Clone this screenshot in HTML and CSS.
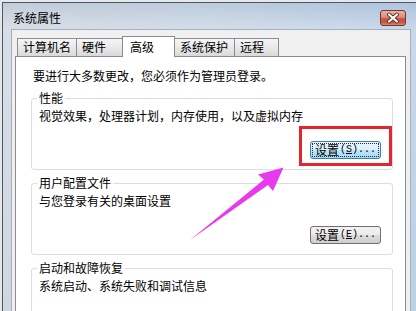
FILE: index.html
```html
<!DOCTYPE html>
<html lang="zh-CN">
<head>
<meta charset="utf-8">
<title>系统属性</title>
<link rel="stylesheet" href="styles.css">
</head>
<body>
<div class="screen">
  <div class="window">
    <div class="titlebar">
      <span class="title">系统属性</span>
      <span class="close">
        <svg width="26" height="16" viewBox="0 0 26 16">
          <path d="M9 4.5 L17 11.5 M17 4.5 L9 11.5" stroke="#5a2a22" stroke-width="4" stroke-linecap="round"/>
          <path d="M9 4.5 L17 11.5 M17 4.5 L9 11.5" stroke="#ffffff" stroke-width="2.2" stroke-linecap="round"/>
        </svg>
      </span>
    </div>
    <div class="client">
      <div class="tabs">
        <div class="tab t1">计算机名</div>
        <div class="tab t2">硬件</div>
        <div class="tab active">高级</div>
        <div class="tab t4">系统保护</div>
        <div class="tab t5">远程</div>
      </div>
      <div class="panel">
        <p class="intro">要进行大多数更改，您必须作为管理员登录。</p>
        <fieldset class="group">
          <legend>性能</legend>
          <p class="desc">视觉效果，处理器计划，内存使用，以及虚拟内存</p>
          <div class="actions">
            <button class="btn focused"><span class="focus-ring">设置<span class="acc">(<u>S</u>)...</span></span></button>
          </div>
        </fieldset>
        <fieldset class="group">
          <legend>用户配置文件</legend>
          <p class="desc">与您登录有关的桌面设置</p>
          <div class="actions">
            <button class="btn"><span class="focus-ring plain">设置<span class="acc">(<u>E</u>)...</span></span></button>
          </div>
        </fieldset>
        <fieldset class="group last">
          <legend>启动和故障恢复</legend>
          <p class="desc">系统启动、系统失败和调试信息</p>
        </fieldset>
      </div>
    </div>
  </div>
  <div class="highlight"></div>
  <svg class="arrow" width="416" height="311" viewBox="0 0 416 311">
    <polygon points="190,240 264,179.5 258,174.5 283.5,167.5 273,191 268,185" fill="#e839ec"/>
  </svg>
</div>
</body>
</html>
```
FILE: styles.css
```css
html, body {
  margin: 0;
  padding: 0;
}
body {
  width: 416px;
  height: 311px;
  overflow: hidden;
  background: #e4e8ed;
  font-family: "Noto Sans CJK SC", "Noto Sans", sans-serif;
  font-size: 12px;
  color: #000;
}
.screen {
  position: relative;
  width: 416px;
  height: 311px;
  box-sizing: border-box;
  padding: 2px 0 0 2px;
  overflow: hidden;
}
.window {
  height: 100%;
  box-sizing: border-box;
  border-top: 1px solid #4e5863;
  border-left: 1px solid #4e5863;
  padding: 0 5px 0 8px;
  display: flex;
  flex-direction: column;
  background:
    linear-gradient(to bottom, rgba(255,255,255,0) 0, rgba(255,255,255,0.35) 26px, rgba(255,255,255,0.2) 100%),
    linear-gradient(to right, #c3cdd9 0%, #bccbdc 50%, #adc4df 100%);
}
.titlebar {
  height: 26px;
  flex: none;
  box-sizing: border-box;
  padding-top: 8px;
  display: flex;
  align-items: flex-start;
}
.title {
  margin-left: 2px;
  line-height: 14px;
}
.close {
  margin-left: auto;
  margin-right: 5px;
  margin-top: -1px;
  width: 26px;
  height: 16px;
  box-sizing: border-box;
  border: 1px solid #7a3429;
  border-radius: 3px;
  background: linear-gradient(#eab3a5 0%, #dc8b79 45%, #c9553f 55%, #c4573f 80%, #d98a6f 100%);
  display: flex;
  align-items: center;
  justify-content: center;
  overflow: hidden;
}
.close svg {
  display: block;
  flex: none;
}
.client {
  flex: 1;
  min-height: 0;
  border: 1px solid #a3b0bf;
  border-bottom: none;
  background: #f0f0f0;
  padding: 6px 4px 0 3px;
  display: flex;
  flex-direction: column;
  overflow: hidden;
}
.tabs {
  display: flex;
  flex: none;
  align-items: flex-end;
  height: 20px;
  padding-left: 3px;
  position: relative;
  z-index: 1;
}
.tab {
  height: 18px;
  box-sizing: border-box;
  border: 1px solid #898c95;
  border-bottom: none;
  padding-left: 5px;
  line-height: 16px;
  white-space: nowrap;
  background: linear-gradient(#f6f6f6, #e6e6e6 60%, #d9d9d9);
  margin-left: -1px;
}
.t1 { width: 60px; }
.t2 { width: 47px; }
.t4 { width: 61px; }
.t5 { width: 45px; }
.tab.active {
  width: 53px;
  height: 21px;
  margin-bottom: -1px;
  padding-left: 7px;
  line-height: 20px;
  background: #fff;
}
.panel {
  flex: 1;
  background: #fff;
  border: 1px solid #898c95;
  padding: 12px 12px 0 15px;
}
.intro {
  margin: 0 0 8px 2px;
  line-height: 14px;
}
.group {
  margin: 0;
  min-width: 0;
  border: 1px solid #d5dfe5;
  border-radius: 3px;
  padding: 0 11px 10px 7px;
}
.group + .group {
  margin-top: 6px;
}
.group.last {
  padding-bottom: 40px;
}
.group legend {
  padding: 0 2px;
  margin-left: -2px;
  line-height: 14px;
}
.desc {
  margin: 4px 0 0 0;
  line-height: 14px;
}
.actions {
  display: flex;
  justify-content: flex-end;
  margin-top: 18px;
}
.btn {
  width: 71px;
  height: 18px;
  box-sizing: border-box;
  margin: 0;
  padding: 1px;
  border: 1px solid #707070;
  border-radius: 3px;
  background: linear-gradient(#f2f2f2 0%, #ebebeb 50%, #dddddd 50%, #cfcfcf 100%);
  font-family: "Noto Sans CJK SC", sans-serif;
  font-size: 12px;
  color: #000;
  display: flex;
}
.btn.focused {
  border-color: #3c7fb1;
  background: linear-gradient(#eaf6fd 0%, #d9f0fc 50%, #bee6fd 50%, #a7d9f5 100%);
}
.focus-ring {
  flex: 1;
  display: flex;
  align-items: center;
  justify-content: center;
  border: 1px dotted #1f2f3f;
  line-height: 12px;
  white-space: nowrap;
}
.focus-ring.plain {
  border-color: transparent;
}
.acc {
  font-family: "Liberation Mono", "DejaVu Sans Mono", monospace;
  font-size: 10px;
  margin-left: 1px;
}
.acc u {
  text-decoration-thickness: 1px;
  text-underline-offset: 1px;
}
.highlight {
  position: absolute;
  left: 299px;
  top: 126px;
  width: 93px;
  height: 40px;
  box-sizing: border-box;
  border: 3px solid #e3262c;
}
.arrow {
  position: absolute;
  left: 0;
  top: 0;
  pointer-events: none;
}
```
